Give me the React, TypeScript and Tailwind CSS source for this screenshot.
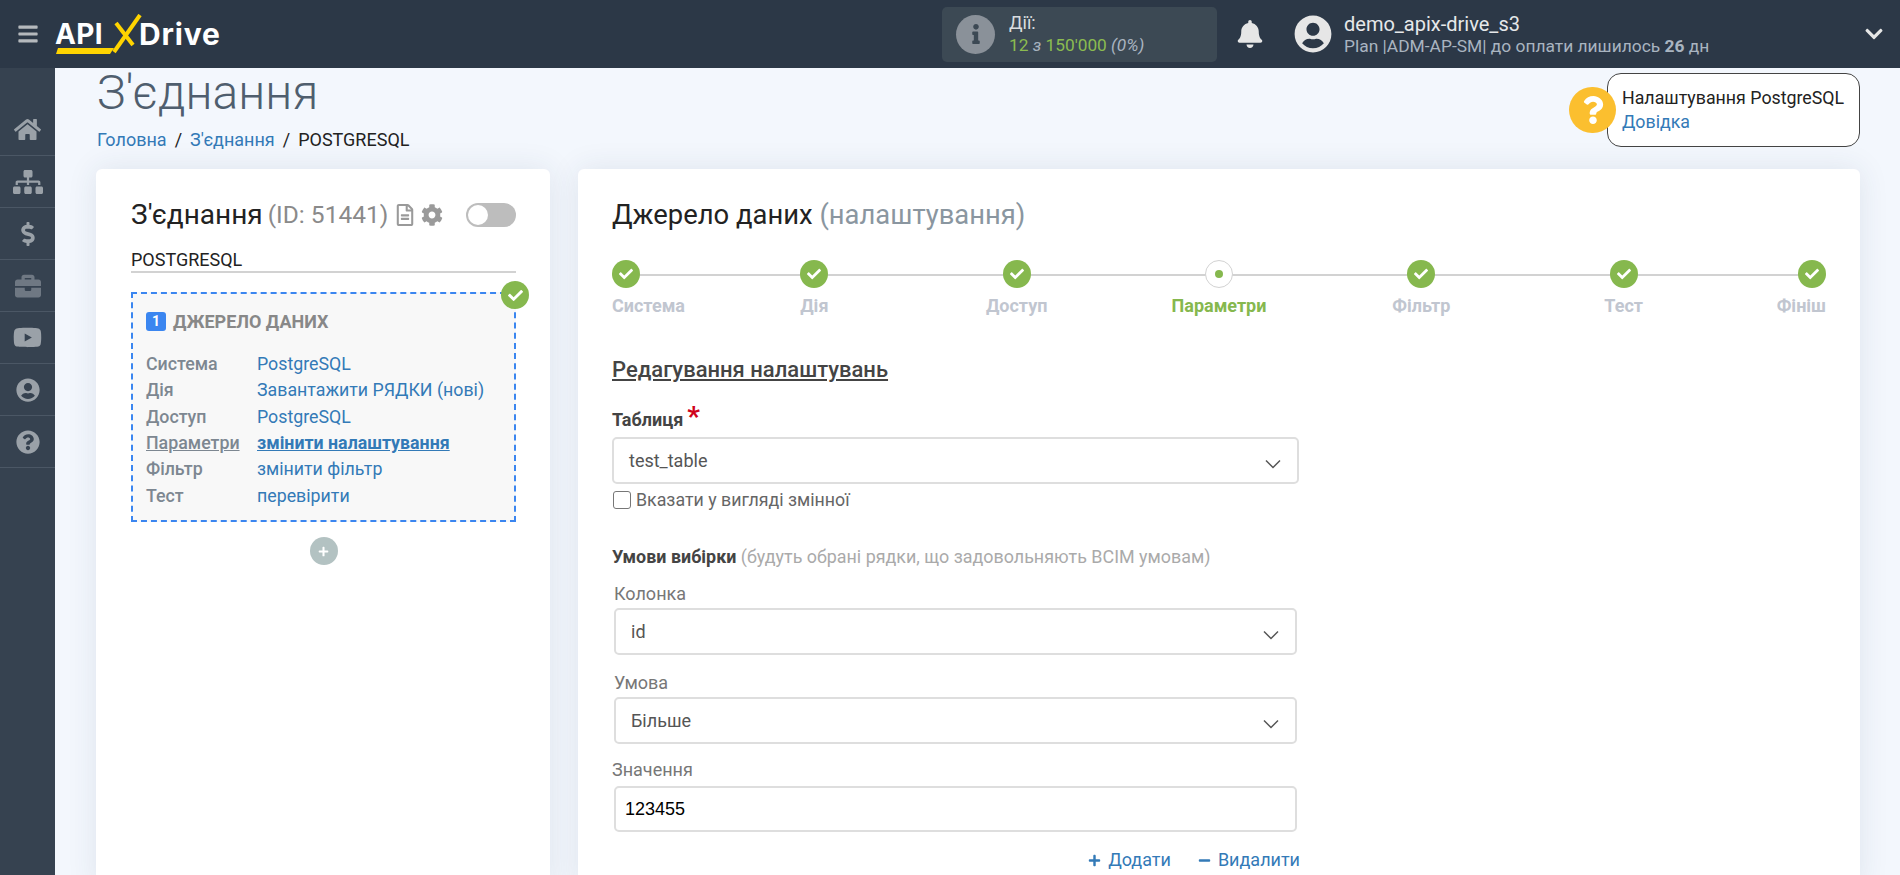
import React from 'react';
import {
  FaBars, FaBell, FaBriefcase, FaCheck, FaChevronDown, FaCog, FaDollarSign, FaHome, FaInfo, FaMinus,
  FaPlus, FaQuestion, FaQuestionCircle, FaRegFileAlt, FaSitemap, FaUserCircle, FaYoutube,
} from 'react-icons/fa';

const font = "font-['Roboto',sans-serif]";

const menuItems = [
  { icon: FaHome, size: 'text-[27px]', color: 'text-[#9aa1a8]' },
  { icon: FaSitemap, size: 'text-[30px]', color: 'text-[#9aa1a8]' },
  { icon: FaDollarSign, size: 'text-[24px]', color: 'text-[#9aa1a8]' },
  { icon: FaBriefcase, size: 'text-[26px]', color: 'text-[#6f7883]' },
  { icon: FaYoutube, size: 'text-[29px]', color: 'text-[#9aa1a8]' },
  { icon: FaUserCircle, size: 'text-[24px]', color: 'text-[#9aa1a8]' },
  { icon: FaQuestionCircle, size: 'text-[24px]', color: 'text-[#9aa1a8]' },
];

const summaryRows = [
  { label: 'Система', value: 'PostgreSQL' },
  { label: 'Дія', value: 'Завантажити РЯДКИ (нові)' },
  { label: 'Доступ', value: 'PostgreSQL' },
  { label: 'Параметри', value: 'змінити налаштування', active: true },
  { label: 'Фільтр', value: 'змінити фільтр' },
  { label: 'Тест', value: 'перевірити' },
];

const steps = ['Система', 'Дія', 'Доступ', 'Параметри', 'Фільтр', 'Тест', 'Фініш'];

const SelectBox = ({ value, className }: { value: string; className: string }) => (
  <div className={`flex h-[47px] items-center justify-between rounded-[5px] border-2 border-[#dedede] bg-white pl-[15px] pr-[16px] text-[18px] text-[#555] ${className}`}>
    <span className="-mt-[1px]">{value}</span>
    <svg width="16" height="10" viewBox="0 0 16 10" className="mt-[7px]" fill="none" stroke="#555" strokeWidth="1.5">
      <path d="M1 1.5l7 7 7-7" />
    </svg>
  </div>
);

const Logo = () => (
  <div className="relative ml-[16px] flex h-[40px] w-[168px] items-center font-['Inter',sans-serif] font-bold leading-none text-white">
    <span className="w-[57px] text-[28px] tracking-[0.4px]">API</span>
    <svg width="30" height="40" viewBox="0 0 30 40" className="shrink-0" fill="none" stroke="#ffd400" strokeWidth="4">
      <path d="M4 9l17 22" />
      <path d="M28 1L2 38" />
    </svg>
    <span className="-ml-[3px] text-[30px] tracking-[0.8px]">Drive</span>
    <svg width="58" height="6" viewBox="0 0 58 6" className="absolute bottom-[0px] left-[1px]" fill="#ffd400">
      <polygon points="2,0 58,0 54,6 0,6" />
    </svg>
  </div>
);

const Header = () => (
  <div className="flex h-[68px] shrink-0 items-center bg-[#2c3847]">
    <FaBars className="ml-[17px] text-[22px] text-[#b5b9bd]" />
    <Logo />

    <div className="ml-[719px] flex h-[55px] w-[275px] items-center rounded-[5px] bg-[#3c4954] pl-[14px]">
      <div className="flex h-[39px] w-[39px] items-center justify-center rounded-full bg-[#8a9199]">
        <FaInfo className="text-[20px] text-[#3c4954]" />
      </div>
      <div className="ml-[14px]">
        <div className="text-[18px] leading-[22px] text-[#d8dcdf]">Дії:</div>
        <div className="text-[17.3px] leading-[22px] text-[#8bbb50]">
          12 <i className="text-[#a9b4c0]">з</i> 150'000 <i className="text-[#a9b4c0]">(0%)</i>
        </div>
      </div>
    </div>

    <FaBell className="ml-[19px] text-[28px] text-[#e6e6e6]" />

    <FaUserCircle className="ml-[30px] text-[38px] text-[#e6e6e6]" />
    <div className="ml-[12px]">
      <div className="text-[20px] leading-[24px] text-[#e6e8ea]">demo_apix-drive_s3</div>
      <div className="text-[17.4px] leading-[20px] text-[#a9b4c0]">
        Plan |ADM-AP-SM| до оплати лишилось <b>26</b> дн
      </div>
    </div>
    <FaChevronDown className="ml-auto mr-[16px] text-[20px] text-[#e6e6e6]" />
  </div>
);

const Sidebar = () => (
  <div className="w-[55px] shrink-0 bg-[#364250] pt-[36px]">
    {menuItems.map((item, index) => (
      <div key={index} className="flex h-[52px] items-center justify-center border-b border-[#4b5765]">
        <item.icon className={`${item.size} ${item.color}`} />
      </div>
    ))}
  </div>
);

const ConnectionCard = () => (
  <div className="h-[720px] w-[454px] shrink-0 rounded-[6px] bg-white pl-[35px] pr-[34px] pt-[27px] shadow-[0_0_30px_rgba(40,60,90,0.1)]">
    <div className="flex h-[38px] items-center">
      <span className="text-[28px] text-[#222]">З'єднання</span>
      <span className="ml-[5px] text-[24.5px] text-[#8a8a8a]">(ID: 51441)</span>
      <FaRegFileAlt className="ml-[6px] text-[22px] text-[#9a9a9a]" />
      <FaCog className="ml-[5px] text-[22px] text-[#9a9a9a]" />
      <div className="ml-auto flex h-[24px] w-[50px] items-center rounded-full bg-[#bdbdbd] pl-[2px]">
        <div className="h-[20px] w-[20px] rounded-full bg-white" />
      </div>
    </div>
    <div className="mt-[12px] h-[27px] border-b-2 border-[#d2d2d2] text-[18px] leading-[28px] text-[#222]">POSTGRESQL</div>

    <div className="relative mt-[19px] h-[230px] border-2 border-dashed border-[#3b86f0] bg-[#f8f8f8] pl-[13px] pt-[14px]">
      <div className="absolute right-[-15px] top-[-13px] flex h-[28px] w-[28px] items-center justify-center rounded-full bg-[#86b84e]">
        <FaCheck className="text-[15px] text-white" />
      </div>
      <div className="flex items-center">
        <span className="flex h-[19px] w-[20px] items-center justify-center rounded-[3px] bg-[#3b86f0] text-[14px] font-bold text-white">1</span>
        <span className="ml-[7px] text-[18px] font-bold text-[#888]">ДЖЕРЕЛО ДАНИХ</span>
      </div>
      <div className="mt-[16px]">
        {summaryRows.map((row) => (
          <div key={row.label} className="flex h-[26.4px] items-center text-[17.8px]">
            <span className={`w-[111px] font-medium text-[#7d8791] ${row.active ? 'underline' : ''}`}>{row.label}</span>
            <span className={`text-[#337ab7] ${row.active ? 'font-bold underline' : ''}`}>{row.value}</span>
          </div>
        ))}
      </div>
    </div>

    <div className="mt-[15px] flex justify-center">
      <div className="flex h-[28px] w-[28px] items-center justify-center rounded-full bg-[#b3c2c2]">
        <FaPlus className="text-[11px] text-white" />
      </div>
    </div>
  </div>
);

const Stepper = () => (
  <div className="relative mt-[26px] grid grid-cols-[1fr_2fr_2fr_2fr_2fr_2fr_1fr]">
    <div className="absolute left-0 right-0 top-[14px] h-[2px] bg-[#d2d2d2]" />
    {steps.map((step, index) => {
      const align = index === 0 ? 'items-start' : index === steps.length - 1 ? 'items-end' : 'items-center';
      const current = step === 'Параметри';
      return (
        <div key={step} className={`relative flex flex-col ${align}`}>
          {current ? (
            <div className="flex h-[28px] w-[28px] items-center justify-center rounded-full border border-[#d2d2d2] bg-white">
              <div className="h-[8px] w-[8px] rounded-full bg-[#86b84e]" />
            </div>
          ) : (
            <div className="flex h-[28px] w-[28px] items-center justify-center rounded-full bg-[#86b84e]">
              <FaCheck className="text-[14px] text-white" />
            </div>
          )}
          <div className={`mt-[6px] text-[18px] font-bold leading-[24px] ${current ? 'text-[#86b84e]' : 'text-[#c1c6d0]'}`}>{step}</div>
        </div>
      );
    })}
  </div>
);

const SettingsCard = () => (
  <div className="h-[720px] flex-1 rounded-[6px] bg-white px-[34px] pt-[27px] shadow-[0_0_30px_rgba(40,60,90,0.1)]">
    <div className="h-[38px] text-[27.4px] leading-[38px] text-[#222]">
      Джерело даних <span className="text-[#8a96a0]">(налаштування)</span>
    </div>
    <Stepper />

    <div className="mt-[38px] text-[22px] font-medium leading-[28px] text-[#444] underline">Редагування налаштувань</div>

    <div className="mt-[21px] flex h-[28px] items-center text-[18px] font-bold text-[#444]">
      Таблиця
      <span className="ml-[4px] -mt-[5px] text-[28px] font-bold leading-none text-[#d0021b]">*</span>
    </div>
    <SelectBox value="test_table" className="mt-[4px] w-[687px]" />
    <label className="mt-[7px] flex h-[18px] items-center text-[17.8px] text-[#666]">
      <span className="ml-[1px] h-[18px] w-[18px] rounded-[3px] border border-[#777] bg-white" />
      <span className="ml-[5px]">Вказати у вигляді змінної</span>
    </label>

    <div className="mt-[36px] h-[24px] text-[17.9px] leading-[24px] text-[#aaa]">
      <b className="text-[#444]">Умови вибірки</b> (будуть обрані рядки, що задовольняють ВСІМ умовам)
    </div>

    <div className="mt-[13px] ml-[2px] w-[683px]">
      <div className="h-[24px] text-[18px] leading-[24px] text-[#777]">Колонка</div>
      <SelectBox value="id" className="mt-[2px]" />
      <div className="mt-[16px] h-[24px] text-[18px] leading-[24px] text-[#777]">Умова</div>
      <SelectBox value="Більше" className="mt-[2px]" />
      <div className="-ml-[2px] mt-[14px] h-[24px] text-[18px] leading-[24px] text-[#777]">Значення</div>
      <div className="mt-[4px] flex h-[46px] items-center rounded-[5px] border-2 border-[#dedede] bg-white pl-[9px] font-['Liberation_Sans',sans-serif] text-[18px] text-black">
        123455
      </div>
      <div className="mt-[16px] flex justify-end text-[18px] leading-[24px] text-[#337ab7]">
        <span className="flex items-center"><FaPlus className="mr-[7px] text-[13px]" />Додати</span>
        <span className="ml-[27px] -mr-[3px] flex items-center"><FaMinus className="mr-[7px] text-[13px]" />Видалити</span>
      </div>
    </div>
  </div>
);

const App: React.FC = () => {
  return (
    <div className={`flex h-screen w-[1900px] flex-col overflow-hidden bg-[#f3f7fd] ${font}`}>
      <Header />
      <div className="flex min-h-0 flex-1">
        <Sidebar />
        <div className="min-w-0 flex-1 pl-[41px] pr-[40px]">
          <div className="flex h-[101px] justify-between">
            <div className="pl-[1px]">
              <div className="text-[48px] font-light leading-[50px] text-[#4f5e6e]">З'єднання</div>
              <div className="mt-[10px] text-[18px] leading-[24px] text-[#222]">
                <span className="text-[#337ab7]">Головна</span>
                <span className="mx-[8px]">/</span>
                <span className="text-[#337ab7]">З'єднання</span>
                <span className="mx-[8px]">/</span>
                POSTGRESQL
              </div>
            </div>
            <div className="mt-[5px] flex h-[74px] items-center">
              <div className="relative z-10 -mr-[9px] flex h-[46px] w-[47px] items-center justify-center rounded-full bg-[#fbbf2f]">
                <FaQuestion className="text-[28px] text-white" />
              </div>
              <div className="flex h-[74px] w-[253px] flex-col justify-center rounded-[14px] border border-[#444] bg-white pl-[14px] text-[17.8px] leading-[24px] text-[#222]">
                <div>Налаштування PostgreSQL</div>
                <div className="text-[#337ab7]">Довідка</div>
              </div>
            </div>
          </div>
          <div className="flex gap-[28px]">
            <ConnectionCard />
            <SettingsCard />
          </div>
        </div>
      </div>
    </div>
  );
};

export default App;
